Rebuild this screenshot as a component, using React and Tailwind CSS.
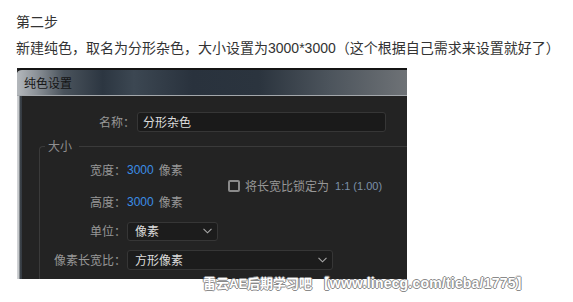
import React from 'react';

const Chevron = () => (
  <svg width="9" height="6" viewBox="0 0 9 6" className="shrink-0">
    <polyline points="0.5,0.8 4.5,4.8 8.5,0.8" fill="none" stroke="#a8a8a8" strokeWidth="1.1" />
  </svg>
);

const Row = ({ label, children, className = '' }) => (
  <div className={`flex items-center h-[20px] ${className}`}>
    <span className="w-[86px] text-right text-[#979797] shrink-0">{label}：</span>
    <div className="ml-[1px] flex items-center">{children}</div>
  </div>
);

const App = () => {
  return (
    <div className="relative w-[573px] h-[302px] bg-white overflow-hidden font-['Noto_Sans_CJK_SC','Noto_Sans',sans-serif]">
      <div className="pl-[16px] pt-[8px] text-[14px] leading-[26px] text-[#333]">
        <p>第二步</p>
        <p>
          新建纯色，取名为分形杂色，大小设置为
          <span className="font-['Liberation_Sans',sans-serif]">3000*3000</span>
          （这个根据自己需求来设置就好了）
        </p>
      </div>

      {/* dialog capture */}
      <div className="ml-[17px] mt-[7px] w-[390px] h-[211px] flex flex-col bg-[#232323] overflow-hidden">
        <div className="h-[28px] shrink-0 border-t-2 border-[#141414] rounded-tl-[5px] border-b border-b-[#a3a7ab] bg-[linear-gradient(to_right,#b4b8bc_0%,#8c9298_5%,#4a535c_12%,#2c3641_22%,#3c4752_30%,#29323d_45%,#2b343e_62%,#4c545c_80%,#6e7276_100%)] flex items-center pl-[7px]">
          <span className="text-[12px] text-[#151515] leading-none">纯色设置</span>
        </div>
        <div className="flex flex-1 min-h-0">
          <div className="w-[5px] bg-[linear-gradient(to_right,#d3d5d7_0%,#c2c5c8_40%,#3d444b_60%,#343a41_100%)]" />
          <div className="flex-1 text-[12px] leading-[20px] text-[#979797]">
            <div className="flex items-center mt-[16px] h-[20px]">
              <span className="w-[113px] text-right">名称：</span>
              <div className="ml-[2px] w-[249px] h-[20px] rounded-[3px] bg-[#1a1a1a] border border-[#363636] pl-[5px] text-[#dcdcdc] leading-[18px]">
                分形杂色
              </div>
            </div>

            <fieldset className="ml-[17px] mt-[6px] border-l border-t border-[#3a3a3a] rounded-tl-[4px] h-[150px]">
              <legend className="ml-[5px] pl-[3px] pr-[7px] leading-[16px] text-[#8f8f8f]">大小</legend>
              <div className="flex pt-[6px]">
                <div className="w-[188px]">
                  <Row label="宽度">
                    <span className="text-[#3b8de6] font-['Liberation_Sans',sans-serif]">3000</span>
                    <span className="ml-[5px]">像素</span>
                  </Row>
                  <Row label="高度" className="mt-[12px]">
                    <span className="text-[#3b8de6] font-['Liberation_Sans',sans-serif]">3000</span>
                    <span className="ml-[5px]">像素</span>
                  </Row>
                </div>
                <div className="flex items-center">
                  <span className="w-[12px] h-[12px] border-2 border-[#8a8a8a] rounded-[2px]" />
                  <span className="ml-[5px]">将长宽比锁定为</span>
                  <span className="ml-[6px] text-[11px] text-[#7c90a8] font-['Liberation_Sans',sans-serif]">1:1 (1.00)</span>
                </div>
              </div>
              <Row label="单位" className="mt-[9px]">
                <div className="w-[91px] h-[19px] rounded-[3px] bg-[#1c1c1c] border border-[#363636] flex items-center justify-between pl-[7px] pr-[5px] text-[#dcdcdc]">
                  <span>像素</span>
                  <Chevron />
                </div>
              </Row>
              <Row label="像素长宽比" className="mt-[9px]">
                <div className="w-[206px] h-[20px] rounded-[3px] bg-[#1c1c1c] border border-[#363636] flex items-center justify-between pl-[7px] pr-[5px] text-[#dcdcdc]">
                  <span>方形像素</span>
                  <Chevron />
                </div>
              </Row>
            </fieldset>
          </div>
        </div>
      </div>

      {/* watermark */}
      <div className="absolute left-[203px] top-[275px] text-[13px] font-bold leading-[16px] text-white font-['Liberation_Sans','Noto_Sans_CJK_SC',sans-serif] [text-shadow:1px_0_#8a8a8a,-1px_0_#8a8a8a,0_1px_#8a8a8a,0_-1px_#8a8a8a] whitespace-nowrap">
        雷云AE后期学习吧 <span className="text-[14px] tracking-[0.2px]">【www.linecg.com/tieba/1775】</span>
      </div>
    </div>
  );
};

export default App;
